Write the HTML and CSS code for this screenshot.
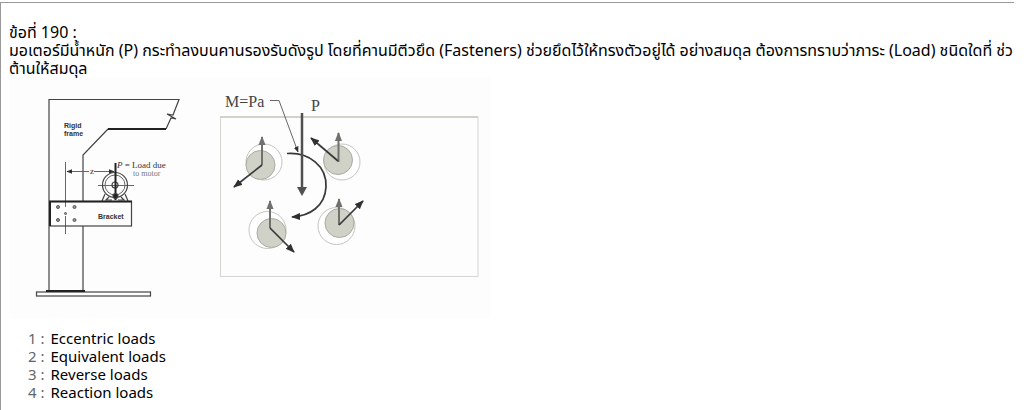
FILE: index.html
```html
<!DOCTYPE html>
<html lang="th">
<head>
<meta charset="utf-8">
<title>ข้อที่ 190</title>
<link rel="stylesheet" href="styles.css">
</head>
<body>
<main class="question">
  <h1 class="number">ข้อที่ 190 :</h1>
  <p class="prompt">มอเตอร์มีน้ำหนัก (P) กระทำลงบนคานรองรับดังรูป โดยที่คานมีตีวยึด (Fasteners) ช่วยยึดไว้ให้ทรงตัวอยู่ได้ อย่างสมดุล ต้องการทราบว่าภาระ (Load) ชนิดใดที่ ช่ว<br>ต้านให้สมดุล</p>
  <svg class="figure" viewBox="9 77 481 241" role="img" aria-label="Motor on a bracket and the forces on its fasteners">
    <defs>
      <marker id="dark" viewBox="0 0 10 8" refX="9" refY="4" markerWidth="9" markerHeight="8" markerUnits="userSpaceOnUse" orient="auto"><path d="M0 0L10 4L0 8z" fill="#303030"/></marker>
      <marker id="gray" viewBox="0 0 10 8" refX="9" refY="4" markerWidth="9" markerHeight="8" markerUnits="userSpaceOnUse" orient="auto"><path d="M0 0L10 4L0 8z" fill="#70706c"/></marker>
      <marker id="small" viewBox="0 0 10 8" refX="9" refY="4" markerWidth="6" markerHeight="5" markerUnits="userSpaceOnUse" orient="auto-start-reverse"><path d="M0 0L10 4L0 8z" fill="#303030"/></marker>
    </defs>

    <g class="frame">
      <path d="M49 291V99.500H179L173 115L167 114L176 119L171 118L166 129M108 129L83 155V201M83 226V291"/>
      <path class="bold" d="M108 129H166"/>
      <path class="thin" d="M65.500 162V207M65.500 216V234"/>
      <path class="thin" d="M67 171.500H114" marker-start="url(#small)" marker-end="url(#small)"/>
      <path class="thin" d="M98 185.500H134"/>
      <circle cx="115" cy="185" r="12.500"/>
      <circle class="thin" cx="115" cy="185" r="10"/>
      <circle cx="115" cy="185" r="3"/>
      <path d="M105 194L102 201M125 194L128 201M109 197L106 200H112M121 197L124 200H118"/>
      <path class="bold" d="M115.500 163V200"/>
      <circle class="fill" cx="115.500" cy="196" r="2.500"/>
      <rect x="50" y="201.500" width="81.500" height="24.500"/>
      <path class="bold" d="M49 201.500H132M50 201V226"/>
      <circle class="bolt" cx="58" cy="207" r="1.500"/>
      <circle class="bolt" cx="74.500" cy="207" r="1.500"/>
      <circle class="bolt" cx="58" cy="220" r="1.500"/>
      <circle class="bolt" cx="74.500" cy="220" r="1.500"/>
      <circle class="bolt" cx="65.500" cy="213.500" r="1"/>
      <rect x="36.500" y="292" width="114" height="4"/>
      <path class="bold" d="M46 291H85"/>
    </g>
    <g class="label">
      <text x="64" y="128">Rigid</text>
      <text x="64" y="136">frame</text>
      <text x="98" y="219">Bracket</text>
    </g>
    <g class="label serif">
      <rect class="blank" x="89" y="168" width="5" height="6"/>
      <text x="90" y="174">z</text>
      <text x="117" y="168"><tspan font-style="italic">P</tspan> = Load due</text>
      <text class="faint" x="133" y="176">to motor</text>
    </g>

    <rect class="plate" x="220.500" y="117" width="257.500" height="159.500"/>
    <path class="plate-top" d="M220 117H478"/>
    <g class="hole">
      <circle cx="264" cy="162" r="18"/>
      <circle cx="342" cy="162" r="18"/>
      <circle cx="267.500" cy="230" r="18.500"/>
      <circle cx="336.500" cy="226" r="18.500"/>
    </g>
    <g class="pin">
      <circle cx="260.500" cy="165" r="14.500"/>
      <circle cx="338" cy="160" r="14.500"/>
      <circle cx="271.500" cy="233" r="14.500"/>
      <circle cx="339.500" cy="223" r="14.500"/>
    </g>
    <g class="up">
      <path d="M262 165V137"/>
      <path d="M338.500 162V133"/>
      <path d="M270 228V201"/>
      <path d="M339 225V199"/>
    </g>
    <g class="reaction">
      <path d="M262 165L234 187"/>
      <path d="M338 161L311 138"/>
      <path d="M270 228L294 252"/>
      <path d="M339 225L363 201"/>
      <path d="M287 153.500C309 152 327 166 326 187C325 206 310 216 292 217"/>
    </g>
    <path class="leader" d="M270 100.500H279L298 152" marker-end="url(#small)"/>
    <path class="load" d="M302 113V188"/>
    <path class="load-head" d="M297 187H307L302 196z"/>
    <g class="symbol">
      <text x="225" y="107">M=Pa</text>
      <text x="311" y="111">P</text>
    </g>
  </svg>
  <ol class="answers">
    <li><span class="index">1 :</span>Eccentric loads</li>
    <li><span class="index">2 :</span>Equivalent loads</li>
    <li><span class="index">3 :</span>Reverse loads</li>
    <li><span class="index">4 :</span>Reaction loads</li>
  </ol>
</main>
</body>
</html>
```
FILE: styles.css
```css
body {
  margin: 0;
  background: #fff;
  color: #000;
  font-family: Tahoma, "Noto Sans", "Noto Sans Thai", sans-serif;
  font-size: 16px;
  line-height: 18px;
}

.question {
  box-sizing: border-box;
  min-height: calc(100vh - 2px);
  margin: 2px 21px 0 0;
  padding: 20px 0 6px 8px;
  border-top: 1px solid #999;
  border-left: 1px solid #999;
  overflow: hidden;
}

.number {
  margin: 0;
  font-size: 16px;
  font-weight: 400;
}

.prompt {
  margin: 0;
  white-space: nowrap;
}

.figure {
  display: block;
  width: 100%;
  max-width: 481px;
  background: #fdfdfd;
}

.answers {
  margin: 0;
  padding: 11px 0 0 19px;
  font-size: 15px;
  list-style: none;
}

.index {
  margin-right: 6px;
  color: #666;
}

.frame {
  fill: none;
  stroke: #444;
  stroke-width: 1.2;
}

.frame .thin {
  stroke: #666;
  stroke-width: 1;
}

.frame .bold {
  stroke: #222;
  stroke-width: 2;
}

.frame .fill {
  fill: #222;
}

.frame .bolt {
  fill: #999;
  stroke: #555;
  stroke-width: 1;
}

.label {
  fill: #333;
  font: 700 7px "Liberation Sans", sans-serif;
}

.serif {
  font-weight: 400;
  font-family: "Liberation Serif", serif;
  font-size: 9px;
}

.faint {
  fill: #777;
  font-size: 8px;
}

.blank {
  fill: #fdfdfd;
}

.plate {
  fill: none;
  stroke: #d5d5d2;
}

.plate-top {
  stroke: #d2d2ca;
  stroke-width: 2;
}

.hole {
  fill: #fff;
  stroke: #c4c4c0;
}

.pin {
  fill: #d0d1c7;
  stroke: #aaaaa3;
}

.up path {
  stroke: #70706c;
  stroke-width: 2;
  marker-end: url(#gray);
}

.reaction path {
  fill: none;
  stroke: #383838;
  stroke-width: 1.7;
  marker-end: url(#dark);
}

.leader {
  fill: none;
  stroke: #666;
}

.load {
  stroke: #505050;
  stroke-width: 2.5;
}

.load-head {
  fill: #505050;
}

.symbol {
  fill: #444;
  font: 16px "Liberation Serif", serif;
}
```
